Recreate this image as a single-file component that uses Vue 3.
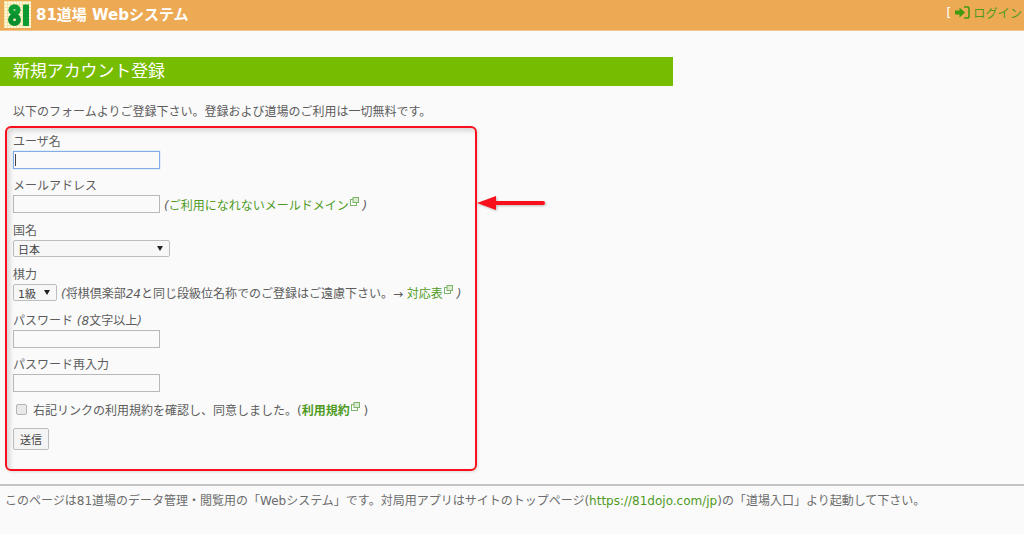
<script setup>
</script>

<template>
  <div class="page">
    <header class="topbar">
      <div class="brand">
        <svg class="logo" width="27" height="27" viewBox="0 0 27 27" role="img" aria-label="81">
          <defs>
            <pattern id="chk" width="3" height="3" patternUnits="userSpaceOnUse">
              <rect width="3" height="3" fill="#fdf8e0" />
              <rect width="3" height="1" fill="#f3e3a4" />
              <rect width="1" height="3" fill="#f3e3a4" />
            </pattern>
          </defs>
          <rect width="27" height="27" fill="url(#chk)" />
          <ellipse cx="10.500" cy="9" rx="3.600" ry="3.300" fill="none" stroke="#0c9a33" stroke-width="5" />
          <ellipse cx="10.500" cy="18.800" rx="4" ry="3.800" fill="none" stroke="#0a8f2e" stroke-width="5" />
          <rect x="19" y="3.500" width="6" height="21.500" rx="0.800" fill="#0c9a33" />
        </svg>
        <span class="brand-name">81道場 Webシステム</span>
      </div>
      <div class="login">
        <span class="bracket">[</span>
        <svg class="login-icon" width="15" height="13" viewBox="0 0 15 13">
          <path d="M0 4.500h4.500V1.500L10 6.500l-5.500 5V8.500H0z" fill="#3f9a12" />
          <path d="M9 1h3.500a1.500 1.500 0 0 1 1.500 1.500v8a1.500 1.500 0 0 1-1.500 1.500H9" fill="none" stroke="#3f9a12" stroke-width="1.600" />
        </svg>
        <a class="link">ログイン</a>
      </div>
    </header>

    <h1 class="title">新規アカウント登録</h1>
    <p class="lead">以下のフォームよりご登録下さい。登録および道場のご利用は一切無料です。</p>

    <form class="form">
      <div class="field">
        <label>ユーザ名</label>
        <div class="input focus"><span class="caret"></span></div>
      </div>
      <div class="field tall">
        <label>メールアドレス</label>
        <div class="row">
          <div class="input"></div>
          <span class="note"><em>(</em><a class="link">ご利用になれないメールドメイン<svg class="ext" width="9" height="9" viewBox="0 0 9 9"><rect x="0.500" y="2.500" width="6" height="6" fill="#fff" stroke="#7fb56a"/><rect x="3" y="0.500" width="5.500" height="5" fill="#dcecd2" stroke="#7fb56a"/></svg></a> <em>)</em></span>
        </div>
      </div>
      <div class="field">
        <label>国名</label>
        <div class="select wide"><span>日本</span><i class="tri"></i></div>
      </div>
      <div class="field taller">
        <label>棋力</label>
        <div class="row">
          <div class="select narrow"><span>1級</span><i class="tri"></i></div>
          <span class="note"><em>(</em>将棋倶楽部<em>24</em>と同じ段級位名称でのご登録はご遠慮下さい。→ <a class="link">対応表<svg class="ext" width="9" height="9" viewBox="0 0 9 9"><rect x="0.500" y="2.500" width="6" height="6" fill="#fff" stroke="#7fb56a"/><rect x="3" y="0.500" width="5.500" height="5" fill="#dcecd2" stroke="#7fb56a"/></svg></a> <em>)</em></span>
        </div>
      </div>
      <div class="field">
        <label>パスワード <em>(8</em>文字以上<em>)</em></label>
        <div class="input"></div>
      </div>
      <div class="field">
        <label>パスワード再入力</label>
        <div class="input"></div>
      </div>
      <div class="agree">
        <span class="check"></span>
        <span>右記リンクの利用規約を確認し、同意しました。(<a class="link strong">利用規約<svg class="ext" width="9" height="9" viewBox="0 0 9 9"><rect x="0.500" y="2.500" width="6" height="6" fill="#fff" stroke="#7fb56a"/><rect x="3" y="0.500" width="5.500" height="5" fill="#dcecd2" stroke="#7fb56a"/></svg></a> )</span>
      </div>
      <button type="button" class="submit">送信</button>

      <div class="mark"></div>
      <svg class="arrow" width="72" height="18" viewBox="0 0 72 18">
        <path d="M1 8 L20 1 V6 H67 a2 2 0 0 1 0 4 H20 V15 Z" fill="#f8101c" />
      </svg>
    </form>

    <footer class="footer">
      このページは81道場のデータ管理・閲覧用の「Webシステム」です。対局用アプリはサイトのトップページ(<a class="link">https://81dojo.com/jp</a>)の「道場入口」より起動して下さい。
    </footer>
  </div>
</template>

<style>
html, body { margin: 0; background: #fafafa; }
</style>

<style scoped>
.page {
  width: 1024px;
  height: 534px;
  overflow: hidden;
  background: #fafafa;
  color: #5c5c5c;
  font-family: "DejaVu Sans", "Noto Sans CJK JP", sans-serif;
  font-size: 12px;
}
.topbar {
  height: 31px;
  box-sizing: border-box;
  background: #edaa55;
  border-bottom: 1px solid #f3c68e;
  display: flex;
  justify-content: space-between;
  align-items: center;
  padding-left: 4px;
}
.brand { display: flex; align-items: center; gap: 5px; }
.logo { display: block; margin-top: -2px; }
.brand-name {
  color: #fff;
  font-size: 15px;
  font-weight: 700;
  margin-top: -3px;
}
.login { display: flex; align-items: center; font-size: 12.200px; margin-top: -5px; padding-right: 2px; }
.bracket { color: #fff; margin-right: 4px; }
.login-icon { margin-right: 3px; }
.link { color: #4f9a1e; text-decoration: none; }
.title {
  margin: 26px 0 0;
  width: 673px;
  height: 29px;
  box-sizing: border-box;
  padding-left: 13px;
  background: #76bc00;
  color: #fff;
  font-size: 16.900px;
  font-weight: 400;
  line-height: 29px;
}
.lead { margin: 17px 0 0 13px; line-height: 18px; height: 18px; }
.form {
  position: relative;
  margin-top: 11px;
  padding: 0 0 0 13px;
}
.field { height: 44px; }
.field.tall { height: 45px; }
.field.taller { height: 46px; }
.field label { display: block; height: 19px; line-height: 20px; }
em { font-style: italic; }
.row { display: flex; align-items: center; }
.input {
  width: 147px;
  height: 18px;
  box-sizing: border-box;
  border: 1px solid #b8b8b8;
  background: #fafafa;
  position: relative;
}
.input.focus {
  border-color: #82aee8;
  box-shadow: 0 0 1px #82aee8;
}
.caret {
  position: absolute;
  left: 1px;
  top: 2px;
  width: 1px;
  height: 12px;
  background: #444;
}
.note { margin-left: 4px; white-space: nowrap; }
.ext { margin-left: 1px; vertical-align: 4px; }
.select {
  box-sizing: border-box;
  height: 17px;
  border: 1px solid #bdbdbd;
  border-radius: 2px;
  background: #f7f7f7;
  display: flex;
  align-items: center;
  justify-content: space-between;
  padding: 0 4px;
  color: #444;
  font-size: 11px;
}
.select.wide { width: 157px; }
.select.narrow { width: 44px; flex: none; }
.tri {
  width: 0;
  height: 0;
  border-left: 3px solid transparent;
  border-right: 3px solid transparent;
  border-top: 5px solid #222;
  margin-right: 2px;
}
.agree {
  display: flex;
  align-items: center;
  height: 18px;
  margin-top: 1px;
  padding-left: 3px;
}
.check {
  width: 11px;
  height: 11px;
  box-sizing: border-box;
  border: 1px solid #b4b4b4;
  border-radius: 2px;
  background: #e9e9e9;
  margin-right: 6px;
}
.strong { font-weight: 700; }
.submit {
  display: block;
  margin-top: 10px;
  width: 36px;
  height: 22px;
  padding: 0;
  border: 1px solid #bdbdbd;
  border-radius: 2px;
  background: #f4f4f4;
  color: #444;
  font: inherit;
  font-size: 11px;
}
.mark {
  position: absolute;
  left: 5px;
  top: -6px;
  width: 472px;
  height: 345px;
  box-sizing: border-box;
  border: 2px solid #f8101c;
  border-radius: 6px;
  box-shadow: inset 3px 3px 5px rgba(0,0,0,.14), 1px 1px 3px rgba(0,0,0,.12);
  pointer-events: none;
}
.arrow { position: absolute; left: 476px; top: 63px; filter: drop-shadow(1px 1px 1px rgba(0,0,0,.25)); }
.footer {
  margin-top: 34px;
  border-top: 2px solid #c4c4c4;
  padding: 6px 0 0 5px;
  line-height: 18px;
  font-size: 12px;
  color: #6c6c6c;
  white-space: nowrap;
}
</style>
